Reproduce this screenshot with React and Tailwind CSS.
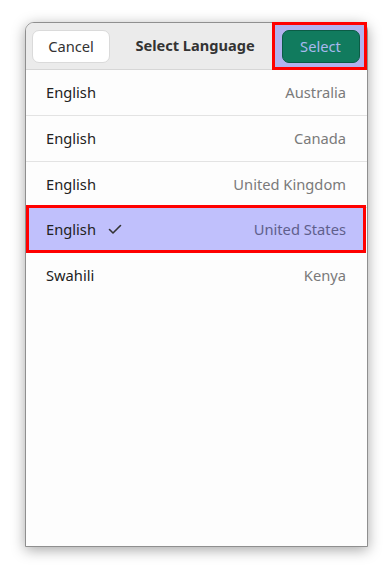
const rows = [
  { lang: "English", region: "Australia" },
  { lang: "English", region: "Canada" },
  { lang: "English", region: "United Kingdom" },
  { lang: "English", region: "United States", selected: true },
  { lang: "Swahili", region: "Kenya", last: true },
]

export default function App(){

  return(

    <div
      className="w-[392px] h-[574px] bg-white pt-[22px] pl-[25px]"
      style={{ fontFamily: "'Noto Sans', 'Open Sans', sans-serif" }}
    >

      <div className="w-[343px] h-[525px] bg-[#fdfdfd] border border-[#8f8f8f] rounded-t-[9px] shadow-[0_3px_14px_rgba(0,0,0,0.35)] flex flex-col">

        {/* HEADER */}

        <div className="h-[47px] shrink-0 bg-[#ebebeb] border-b border-[#d6d6d6] rounded-t-[8px] flex items-center pl-[6px]">

          <button className="w-[78px] h-[33px] bg-white border border-[#dadada] rounded-[7px] text-[14.7px] text-[#333]">
            Cancel
          </button>

          <div className="flex-1 text-center font-bold text-[14.6px] text-[#333] pl-[8px]">
            Select Language
          </div>

          <div className="w-[95px] h-[48px] self-start -mt-[1px] bg-[#b2b2ee] border-[3px] border-[#ff0000] flex items-center justify-center pl-[2px]">
            <button className="w-[78px] h-[33px] bg-[#117b5e] border border-[#0b5c45] rounded-[7px] text-[14.7px] text-[#a9b8ee]">
              Select
            </button>
          </div>

        </div>

        {/* LIST */}

        {rows.map((r,i)=>(

          r.selected ? (

            <div key={i} className="relative h-[48px] -mt-[3px] -mb-[1px] mr-[1px] shrink-0 bg-[#c0c0fc] border-[3px] border-[#ff0000] flex items-center justify-between pl-[17px] pr-[17px] text-[14.7px]">
              <div className="flex items-center gap-[11px] text-[#222]">
                <span>{r.lang}</span>
                <svg width="16" height="16" viewBox="0 0 16 16" fill="none" stroke="#333" strokeWidth="1.6" strokeLinecap="round" strokeLinejoin="round">
                  <path d="M2.5 8.5 L6 12 L13.5 4.5" />
                </svg>
              </div>
              <span className="text-[#5f5f8c]">{r.region}</span>
            </div>

          ) : (

            <div key={i} className={"h-[46px] shrink-0 flex items-center justify-between pl-[20px] pr-[21px] text-[14.7px] " + (r.last ? "" : "border-b border-[#e3e3e3]")}>
              <span className="text-[#222]">{r.lang}</span>
              <span className="text-[#7a7a7a]">{r.region}</span>
            </div>

          )

        ))}

      </div>

    </div>

  )

}
